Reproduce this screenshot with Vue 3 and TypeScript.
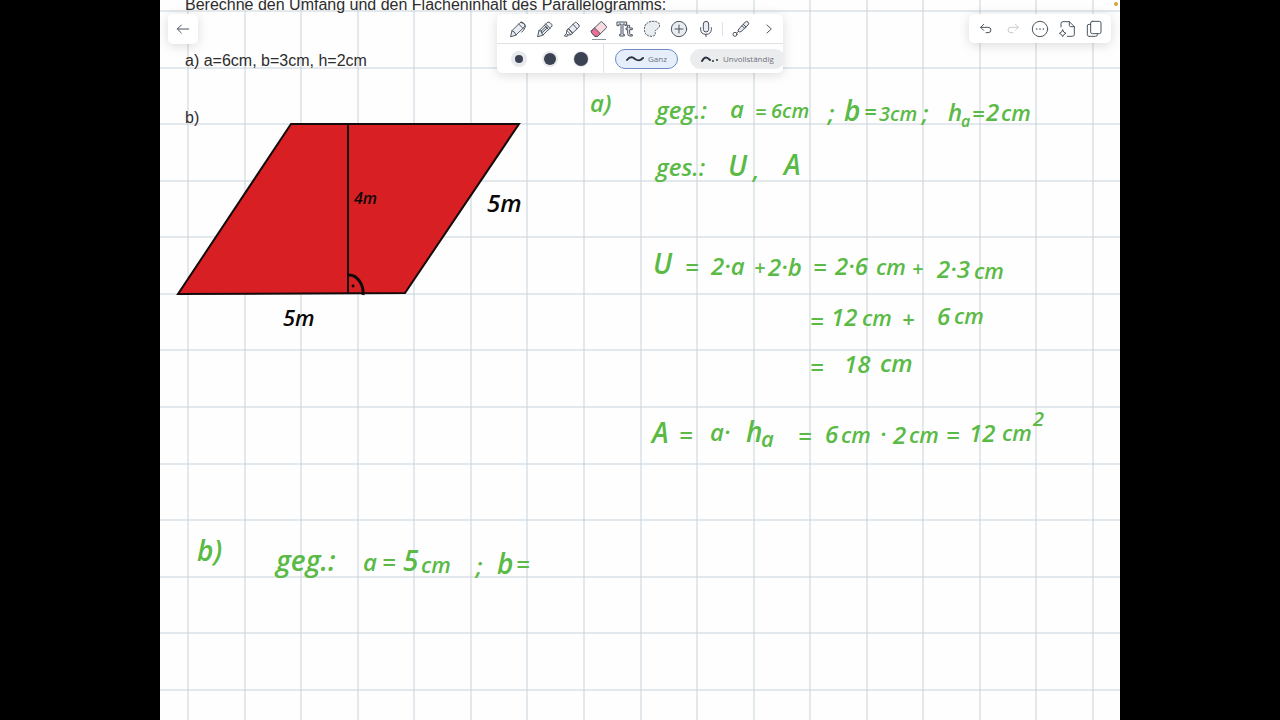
<script setup lang="ts">
import { ref } from 'vue'

interface Note {
  x: number
  y: number
  size: 's' | 'm' | 'n' | 'l' | 'xl'
  text: string
}

const pitch = 905 / 16
const columns = Array.from({ length: 17 }, (_, i) => Math.round(28 + i * pitch))
const rows = Array.from({ length: 13 }, (_, i) => Math.round(11 + i * pitch))

const greenNotes: Note[] = [
  { x: 430, y: 112, size: 'l', text: 'a)' },
  { x: 496, y: 119, size: 'l', text: 'geg.:' },
  { x: 570, y: 118, size: 'l', text: 'a' },
  { x: 595, y: 119, size: 'm', text: '=' },
  { x: 611, y: 118, size: 'm', text: '6cm' },
  { x: 668, y: 122, size: 'l', text: ';' },
  { x: 684, y: 121, size: 'xl', text: 'b' },
  { x: 704, y: 120, size: 'n', text: '=' },
  { x: 719, y: 121, size: 'm', text: '3cm' },
  { x: 762, y: 122, size: 'l', text: ';' },
  { x: 788, y: 121, size: 'l', text: 'h' },
  { x: 801, y: 127, size: 's', text: 'a' },
  { x: 812, y: 122, size: 'n', text: '=' },
  { x: 826, y: 121, size: 'l', text: '2' },
  { x: 841, y: 121, size: 'n', text: 'cm' },

  { x: 496, y: 176, size: 'l', text: 'ges.:' },
  { x: 568, y: 176, size: 'xl', text: 'U' },
  { x: 593, y: 179, size: 'l', text: ',' },
  { x: 624, y: 175, size: 'xl', text: 'A' },

  { x: 493, y: 274, size: 'xl', text: 'U' },
  { x: 525, y: 276, size: 'l', text: '=' },
  { x: 551, y: 275, size: 'l', text: '2·a' },
  { x: 594, y: 275, size: 'm', text: '+' },
  { x: 608, y: 276, size: 'l', text: '2·b' },
  { x: 653, y: 276, size: 'l', text: '=' },
  { x: 675, y: 275, size: 'l', text: '2·6' },
  { x: 716, y: 275, size: 'n', text: 'cm' },
  { x: 752, y: 276, size: 'm', text: '+' },
  { x: 777, y: 278, size: 'l', text: '2·3' },
  { x: 814, y: 279, size: 'n', text: 'cm' },

  { x: 650, y: 330, size: 'l', text: '=' },
  { x: 671, y: 326, size: 'l', text: '12' },
  { x: 702, y: 326, size: 'n', text: 'cm' },
  { x: 742, y: 327, size: 'n', text: '+' },
  { x: 777, y: 325, size: 'l', text: '6' },
  { x: 794, y: 324, size: 'n', text: 'cm' },

  { x: 650, y: 376, size: 'l', text: '=' },
  { x: 684, y: 373, size: 'l', text: '18' },
  { x: 720, y: 372, size: 'l', text: 'cm' },

  { x: 492, y: 443, size: 'xl', text: 'A' },
  { x: 519, y: 444, size: 'l', text: '=' },
  { x: 550, y: 441, size: 'l', text: 'a·' },
  { x: 586, y: 442, size: 'xl', text: 'h' },
  { x: 601, y: 447, size: 'n', text: 'a' },
  { x: 638, y: 445, size: 'l', text: '=' },
  { x: 665, y: 443, size: 'l', text: '6' },
  { x: 681, y: 443, size: 'n', text: 'cm' },
  { x: 720, y: 443, size: 'l', text: '·' },
  { x: 733, y: 444, size: 'l', text: '2' },
  { x: 749, y: 443, size: 'n', text: 'cm' },
  { x: 786, y: 444, size: 'l', text: '=' },
  { x: 809, y: 442, size: 'l', text: '12' },
  { x: 842, y: 441, size: 'n', text: 'cm' },
  { x: 873, y: 426, size: 'm', text: '2' },

  { x: 37, y: 561, size: 'xl', text: 'b)' },
  { x: 116, y: 571, size: 'xl', text: 'geg.:' },
  { x: 203, y: 571, size: 'l', text: 'a' },
  { x: 222, y: 571, size: 'l', text: '=' },
  { x: 243, y: 571, size: 'xl', text: '5' },
  { x: 261, y: 573, size: 'n', text: 'cm' },
  { x: 316, y: 575, size: 'l', text: ';' },
  { x: 337, y: 574, size: 'xl', text: 'b' },
  { x: 356, y: 573, size: 'l', text: '=' }
]

const blackNotes: Note[] = [
  { x: 194, y: 204, size: 's', text: '4m' },
  { x: 327, y: 212, size: 'l', text: '5m' },
  { x: 123, y: 326, size: 'n', text: '5m' }
]

const dots = [
  { label: 'Klein', radius: 4 },
  { label: 'Mittel', radius: 6 },
  { label: 'Groß', radius: 7 }
]

const size = ref('Groß')
const mode = ref<'whole' | 'partial'>('whole')
</script>

<template>
  <div class="screen">
    <main class="stage">
      <svg class="sheet" viewBox="0 0 960 720" role="img" aria-label="Arbeitsblatt">
        <rect width="960" height="720" fill="#fefefe" />
        <g class="grid">
          <line v-for="x in columns" :key="'c' + x" :x1="x" :x2="x" y1="0" y2="720" />
          <line v-for="y in rows" :key="'r' + y" x1="0" x2="960" :y1="y" :y2="y" />
        </g>

        <g class="printed">
          <text x="25" y="10">Berechne den Umfang und den Flächeninhalt des Parallelogramms:</text>
          <text x="25" y="66">a) a=6cm, b=3cm, h=2cm</text>
          <text x="25" y="123">b)</text>
        </g>

        <g class="shape">
          <path class="area" d="M131 124H359L245 293L18 294Z" />
          <path d="M188 124V293" />
          <path class="angle" d="M189 275C197 275 204 284 203 295" />
          <circle cx="193" cy="286" r="1.4" />
        </g>

        <g class="ink green">
          <text v-for="(n, i) in greenNotes" :key="i" :class="n.size" :x="n.x" :y="n.y">{{ n.text }}</text>
        </g>
        <g class="ink black">
          <text v-for="(n, i) in blackNotes" :key="i" :class="n.size" :x="n.x" :y="n.y">{{ n.text }}</text>
        </g>
        <circle cx="956" cy="4" r="2" fill="#d9a13c" />
      </svg>

      <header class="bar">
        <button class="card back" aria-label="Zurück">
          <svg class="icon" viewBox="0 0 48 48"><path d="M41 24H7M19 12L7 24L19 36" /></svg>
        </button>

        <div class="card tools">
          <div class="row upper">
            <div class="set">
              <button aria-label="Stift">
                <svg class="icon" viewBox="0 0 48 48">
                  <path class="tint" d="M2 46L6 29L30 5Q34 1 39 5L44 10Q47 14 43 18L18 42Z" />
                  <path d="M6 29Q15 31 18 42M26 9L39 22M32 4Q44 5 47 16L40 29L35 33" />
                </svg>
              </button>
              <button aria-label="Bleistift">
                <svg class="icon" viewBox="0 0 48 48">
                  <path class="tint" d="M2 46L6 29L30 5Q34 1 39 5L44 10Q47 14 43 18L18 42Z" />
                  <path d="M6 29L13 30L14 36L18 42M26 9L39 22M22 13L35 26M13 30L28 16M15 35L32 20" />
                </svg>
              </button>
              <button aria-label="Textmarker">
                <svg class="icon" viewBox="0 0 48 48">
                  <path class="tint" d="M14 23L32 5Q35 2 38 5L45 12Q48 15 44 19L26 36Z" />
                  <path d="M14 23L26 36L21 41L9 29ZM9 29L7 38L12 42L21 41M7 38L1 45L10 46L12 42M27 10L39 23" />
                </svg>
              </button>
              <button class="active" aria-label="Radierer">
                <svg class="icon" viewBox="0 0 48 48">
                  <path class="rubber" d="M2 29L29 3Q32 1 35 4L46 16Q48 19 45 22L20 46H12L2 36Q-1 32 2 29Z" />
                  <path class="tip" d="M2 29L11 21L28 38L20 46H12L2 36Q-1 32 2 29Z" />
                </svg>
              </button>
              <button aria-label="Text">
                <svg class="icon" viewBox="0 0 48 48">
                  <path class="tint" d="M1 3H29V14H24V9H18V40H22V45H8V40H12V9H6V14H1Z" />
                  <path class="tint" d="M32 13H38V21H46V26H38V37Q38 41 41 41H46V45H39Q32 45 32 38V26H27V21H32Z" />
                </svg>
              </button>
              <button aria-label="Lasso">
                <svg class="icon" viewBox="0 0 48 48">
                  <path class="tint dashed" d="M25 1Q45 0 47 12Q47 20 38 25Q32 29 34 35Q35 45 24 46Q1 46 1 24Q2 3 25 1Z" />
                </svg>
              </button>
              <button aria-label="Einfügen">
                <svg class="icon" viewBox="0 0 48 48">
                  <circle class="tint" cx="24" cy="24" r="23" />
                  <path d="M24 12V36M12 24H36" />
                </svg>
              </button>
              <button aria-label="Aufnahme">
                <svg class="icon" viewBox="0 0 48 48">
                  <rect class="tint" x="16" y="1" width="16" height="32" rx="8" />
                  <path d="M8 20V26Q9 40 24 40Q39 40 40 26V20M24 40V47" />
                </svg>
              </button>
            </div>
            <span class="divider"></span>
            <button class="pointer" aria-label="Laserpointer">
              <svg class="icon" viewBox="0 0 48 48">
                <path class="tint" d="M17 25L37 3Q41 -1 45 3Q49 8 45 12L24 32Q19 34 16 31Q14 28 17 25Z" />
                <path d="M27 14L35 22M31 10L39 18M17 31L11 36" />
                <circle cx="6" cy="40" r="6" />
              </svg>
            </button>
            <button class="more" aria-label="Weiter">
              <svg class="icon" viewBox="0 0 48 48"><path d="M18 12L31 24L18 36" /></svg>
            </button>
          </div>
          <div class="row lower">
            <div class="sizes">
              <button
                v-for="d in dots"
                :key="d.label"
                :aria-label="d.label"
                :aria-pressed="size === d.label"
                @click="size = d.label"
              >
                <svg viewBox="0 0 18 18" width="18" height="18">
                  <circle cx="9" cy="9" r="8" fill="#e8e9ec" />
                  <circle cx="9" cy="9" :r="d.radius" fill="#3b4252" />
                </svg>
              </button>
            </div>
            <div class="modes">
              <button class="pill" :class="{ on: mode === 'whole' }" @click="mode = 'whole'">
                <svg class="wave" viewBox="0 0 18 10"><path d="M1 6C4 2 7 3 9 5C12 7 14 7 17 4" /></svg>
                <span>Ganz</span>
              </button>
              <button class="pill" :class="{ on: mode === 'partial' }" @click="mode = 'partial'">
                <svg class="wave" viewBox="0 0 18 10"><path d="M1 7C4 2 6 3 9 6M12 7V7.1M16 6V6.1" /></svg>
                <span>Unvollständig</span>
              </button>
            </div>
          </div>
        </div>

        <div class="card actions">
          <button aria-label="Rückgängig">
            <svg class="icon" viewBox="0 0 48 48"><path d="M17 10L8 19L17 28M8 19H30Q39 19 39 27Q39 35 30 35H24" /></svg>
          </button>
          <button aria-label="Wiederholen" disabled>
            <svg class="icon" viewBox="0 0 48 48"><path d="M31 10L40 19L31 28M40 19H18Q9 19 9 27Q9 35 18 35H24" /></svg>
          </button>
          <button aria-label="Mehr">
            <svg class="icon" viewBox="0 0 48 48">
              <circle cx="24" cy="24" r="23" />
              <path class="ellipsis" d="M14 24H14.1M24 24H24.1M34 24H34.1" />
            </svg>
          </button>
          <button aria-label="Seite hinzufügen">
            <svg class="icon" viewBox="0 0 48 48">
              <path d="M6 18V8Q6 2 12 2H31L46 17V40Q46 46 40 46H25M31 2V13Q31 17 35 17H46" />
              <path d="M11 27Q13 35 21 37Q13 39 11 47Q9 39 1 37Q9 35 11 27Z" />
            </svg>
          </button>
          <button aria-label="Seiten">
            <svg class="icon" viewBox="0 0 48 48">
              <rect x="14" y="1" width="31" height="37" rx="5" />
              <path d="M14 10H9Q4 10 4 15V41Q4 46 9 46H29Q34 46 34 41V38" />
            </svg>
          </button>
        </div>
      </header>
    </main>
  </div>
</template>

<style>
body {
  margin: 0;
  background: #000;
}
</style>

<style scoped>
.screen {
  display: flex;
  justify-content: center;
  align-items: center;
  min-height: 100vh;
  background: #000;
}
.stage {
  position: relative;
  flex: 1;
  max-width: calc(100vh * 4 / 3);
  font-family: "Open Sans", "Noto Sans", sans-serif;
}
.sheet {
  display: block;
  width: 100%;
}
.grid line {
  stroke: #c6d2da;
  stroke-width: 1;
}
.printed text {
  font: 16px "Liberation Sans", Arial, sans-serif;
  fill: #2d2d2d;
}
.shape path {
  fill: none;
  stroke: #140a0a;
  stroke-width: 2;
}
.shape .area {
  fill: #d81f23;
}
.shape .angle {
  stroke-width: 3;
}
.ink text {
  font-family: "Open Sans", "Noto Sans", sans-serif;
  font-style: italic;
  font-weight: 600;
}
.ink .s { font-size: 16px; }
.ink .m { font-size: 20px; }
.ink .n { font-size: 22px; }
.ink .l { font-size: 24px; }
.ink .xl { font-size: 28px; }
.green { fill: #5aba45; }
.black { fill: #0c0808; }

.bar {
  position: absolute;
  top: 14px;
  left: 0;
  right: 0;
  display: grid;
  grid-template-columns: 1fr auto 1fr;
  align-items: start;
  padding: 0 8px;
}
button {
  display: flex;
  align-items: center;
  justify-content: center;
  margin: 0;
  padding: 0;
  border: 0;
  background: none;
  font: inherit;
  color: #4b5560;
}
button:disabled {
  color: #c9ccd0;
}
.card {
  border-radius: 5px;
  background: #fff;
  box-shadow: 0 2px 12px rgba(0, 0, 0, 0.14);
}
.back {
  width: 30px;
  height: 30px;
}
.icon {
  display: block;
  width: 16px;
  height: 16px;
  overflow: visible;
  fill: none;
  stroke: currentColor;
  stroke-width: 3;
  stroke-linecap: round;
  stroke-linejoin: round;
}
.icon .tint {
  fill: #e9edf1;
}
.icon .dashed {
  stroke-dasharray: 4 5;
}
.icon .rubber {
  fill: #fbd9e1;
}
.icon .tip {
  fill: #ea6f92;
}
.icon .ellipsis {
  stroke-width: 5;
}
.tools {
  width: 286px;
  overflow: hidden;
}
.row {
  display: flex;
  align-items: center;
  height: 29px;
}
.upper {
  border-bottom: 1px solid #dde2e6;
}
.set {
  display: flex;
  width: 214px;
  margin-left: 8px;
}
.set button {
  flex: 1;
  height: 29px;
}
.active {
  position: relative;
}
.active::after {
  content: "";
  position: absolute;
  bottom: 3px;
  width: 14px;
  height: 1px;
  background: #8c959d;
}
.divider {
  width: 1px;
  height: 14px;
  margin-left: 3px;
  background: #dde2e6;
}
.pointer {
  margin-left: 10px;
}
.more {
  margin-left: 12px;
}
.sizes {
  display: flex;
  align-items: center;
  gap: 13px;
  height: 29px;
  padding: 0 13px;
  border-right: 1px solid #dde2e6;
}
.sizes svg {
  display: block;
}
.modes {
  display: flex;
  gap: 12px;
  padding-left: 11px;
}
.pill {
  flex: none;
  gap: 4px;
  height: 20px;
  padding: 0 10px;
  border: 1px solid #ebecee;
  border-radius: 10px;
  background: #ebecee;
  font-size: 8px;
  line-height: 12px;
  color: #6d737a;
}
.pill.on {
  border-color: #6d8cc4;
  background: #e6eefc;
}
.wave {
  width: 18px;
  height: 10px;
  fill: none;
  stroke: #2f3542;
  stroke-width: 2;
  stroke-linecap: round;
}
.actions {
  display: flex;
  justify-self: end;
  width: 136px;
  padding: 0 3px;
  margin-right: 1px;
}
.actions button {
  flex: 1;
  height: 29px;
}
</style>
